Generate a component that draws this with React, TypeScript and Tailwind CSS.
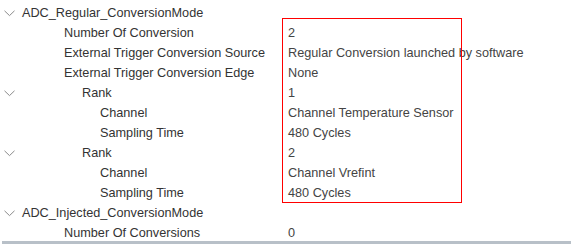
import React from "react";

type Row = { label: string; value?: string; indent: number; chevron?: boolean };

const rows: Row[] = [
  { label: "ADC_Regular_ConversionMode", indent: 22, chevron: true },
  { label: "Number Of Conversion", value: "2", indent: 64 },
  { label: "External Trigger Conversion Source", value: "Regular Conversion launched by software", indent: 64 },
  { label: "External Trigger Conversion Edge", value: "None", indent: 64 },
  { label: "Rank", value: "1", indent: 82, chevron: true },
  { label: "Channel", value: "Channel Temperature Sensor", indent: 100 },
  { label: "Sampling Time", value: "480 Cycles", indent: 100 },
  { label: "Rank", value: "2", indent: 82, chevron: true },
  { label: "Channel", value: "Channel Vrefint", indent: 100 },
  { label: "Sampling Time", value: "480 Cycles", indent: 100 },
  { label: "ADC_Injected_ConversionMode", indent: 22, chevron: true },
  { label: "Number Of Conversions", value: "0", indent: 64 },
];

function Chevron() {
  return (
    <svg width="11" height="7" viewBox="0 0 11 7" className="absolute left-[4px] top-[6px]">
      <path d="M0.5 0.8 L5.5 5.6 L10.5 0.8" fill="none" stroke="#8a8a8a" strokeWidth="1" />
    </svg>
  );
}

export default function App() {
  return (
    <div
      className="relative w-[571px] h-[244px] bg-white overflow-hidden text-[12.7px]"
      style={{ fontFamily: '"Liberation Sans", Arial, sans-serif' }}
    >
      <div className="pt-[4px] flex flex-col">
        {rows.map((r, i) => (
          <div key={i} className="relative flex h-[20px] items-center">
            {r.chevron && <Chevron />}
            <div className="text-[#333] whitespace-nowrap" style={{ paddingLeft: r.indent, width: 288 }}>
              {r.label}
            </div>
            {r.value && <div className="text-[#444] whitespace-nowrap">{r.value}</div>}
          </div>
        ))}
      </div>
      <div className="absolute left-[282px] top-[18px] w-[180px] h-[185px] border border-[#ff0000]" />
      <div className="absolute left-[2px] right-0 top-[241px] h-[3px] bg-[#b8c0c8]" />
    </div>
  );
}
